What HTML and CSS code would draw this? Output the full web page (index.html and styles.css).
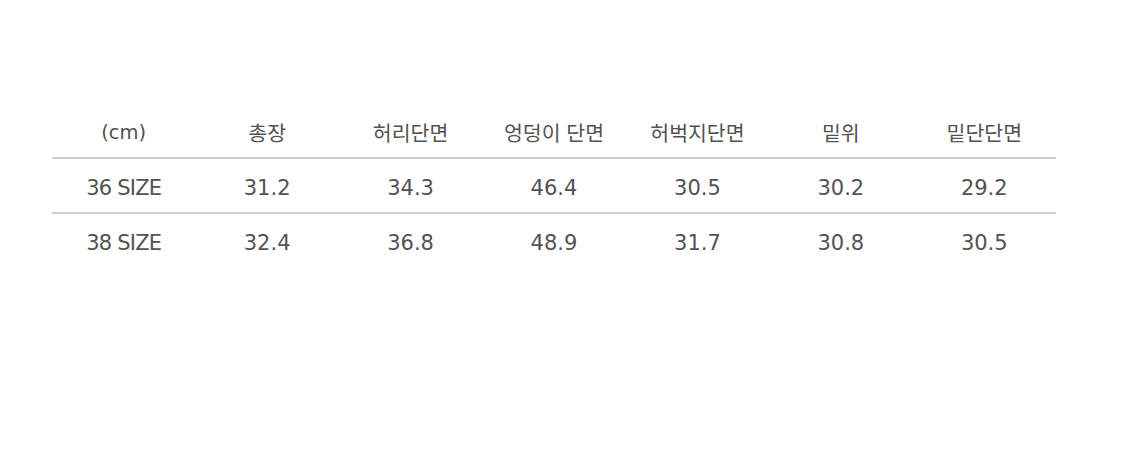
FILE: index.html
```html
<!DOCTYPE html>
<html lang="ko">
<head>
<meta charset="utf-8">
<link rel="stylesheet" href="styles.css">
</head>
<body>
<div class="page">
  <div class="table">
    <div class="row head">
      <div class="cell">(cm)</div>
      <div class="cell ko">총장</div>
      <div class="cell ko">허리단면</div>
      <div class="cell ko">엉덩이 단면</div>
      <div class="cell ko">허벅지단면</div>
      <div class="cell ko">밑위</div>
      <div class="cell ko">밑단단면</div>
    </div>
    <div class="row line">
      <div class="cell size">36 SIZE</div>
      <div class="cell num">31.2</div>
      <div class="cell num">34.3</div>
      <div class="cell num">46.4</div>
      <div class="cell num">30.5</div>
      <div class="cell num">30.2</div>
      <div class="cell num">29.2</div>
    </div>
    <div class="row last">
      <div class="cell size">38 SIZE</div>
      <div class="cell num">32.4</div>
      <div class="cell num">36.8</div>
      <div class="cell num">48.9</div>
      <div class="cell num">31.7</div>
      <div class="cell num">30.8</div>
      <div class="cell num">30.5</div>
    </div>
  </div>
</div>
</body>
</html>
```
FILE: styles.css
```css
html, body {
  margin: 0;
  padding: 0;
  background: #ffffff;
}
.page {
  width: 1125px;
  height: 464px;
  padding: 103px 0 0 52px;
  box-sizing: border-box;
}
.table {
  width: 1004px;
  font-family: "DejaVu Sans", "Noto Sans CJK KR", sans-serif;
  font-size: 19.5px;
  color: #525252;
}
.row {
  display: grid;
  grid-template-columns: repeat(7, 1fr);
  height: 54px;
  align-items: center;
}
.row.line {
  height: 53px;
}
.row.head, .row.line {
  border-bottom: 2px solid #cdcdcd;
}
.cell {
  text-align: center;
  line-height: 1;
  padding-top: 5px;
}
.cell.size {
  font-size: 21px;
  letter-spacing: -0.8px;
}
.cell.num {
  font-size: 21px;
}
.cell.ko {
  font-family: "Noto Sans CJK KR", sans-serif;
  font-size: 20.5px;
}
```
